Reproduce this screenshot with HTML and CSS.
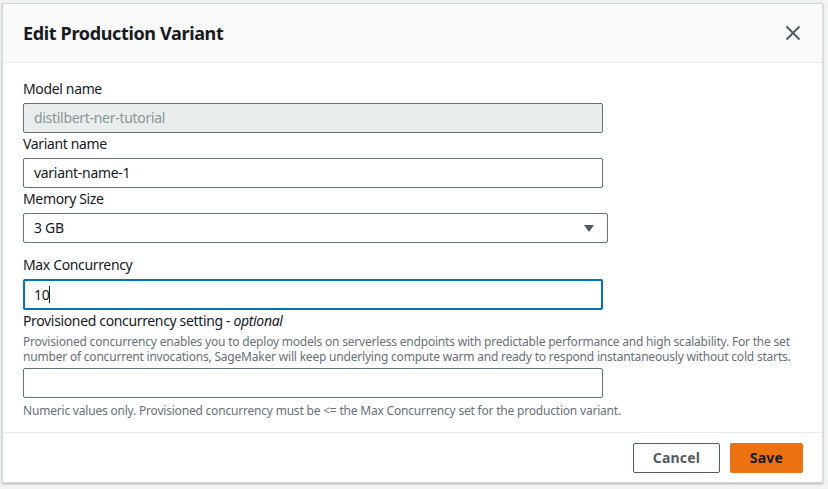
FILE: index.html
```html
<!DOCTYPE html>
<html>
<head>
<meta charset="utf-8">
<link rel="stylesheet" href="styles.css">
</head>
<body>
<div class="modal">
  <div class="header">
    <h2 class="title">Edit Production Variant</h2>
    <button class="close" aria-label="Close">
      <svg width="16" height="16" viewBox="0 0 16 16"><path d="M1.5 1.5 L14.5 14.5 M14.5 1.5 L1.5 14.5" stroke="#545b64" stroke-width="2" fill="none"/></svg>
    </button>
  </div>
  <div class="body">
    <div class="field">
      <label class="label">Model name</label>
      <div class="input disabled">distilbert-ner-tutorial</div>
    </div>
    <div class="field">
      <label class="label">Variant name</label>
      <div class="input">variant-name-1</div>
    </div>
    <div class="field">
      <label class="label">Memory Size</label>
      <div class="input select">3 GB
        <svg class="caret" width="10" height="7" viewBox="0 0 10 7"><path d="M0 0 H10 L5 7 Z" fill="#545b64"/></svg>
      </div>
    </div>
    <div class="field gap-top">
      <label class="label">Max Concurrency</label>
      <div class="input focus">10<span class="cursor"></span></div>
    </div>
    <div class="field">
      <label class="label">Provisioned concurrency setting - <i>optional</i></label>
      <p class="desc">Provisioned concurrency enables you to deploy models on serverless endpoints with predictable performance and high scalability. For the set number of concurrent invocations, SageMaker will keep underlying compute warm and ready to respond instantaneously without cold starts.</p>
      <div class="input"></div>
      <p class="hint">Numeric values only. Provisioned concurrency must be &lt;= the Max Concurrency set for the production variant.</p>
    </div>
  </div>
  <div class="footer">
    <button class="btn cancel">Cancel</button>
    <button class="btn save">Save</button>
  </div>
</div>
</body>
</html>
```
FILE: styles.css
```css
html, body {
  margin: 0;
  padding: 0;
}
body {
  width: 828px;
  height: 489px;
  background: #f2f3f3;
  font-family: "Noto Sans", "Open Sans", sans-serif;
  color: #16191f;
  overflow: hidden;
  padding: 3px 5px 0 2px;
  box-sizing: border-box;
}
.modal {
  width: 821px;
  height: 480px;
  background: #fff;
  border: 1px solid #d5dbdb;
  box-sizing: border-box;
  box-shadow: 0 1px 2px rgba(0,28,36,0.3);
  display: flex;
  flex-direction: column;
}
.header {
  height: 59px;
  background: #fafafa;
  border-bottom: 1px solid #eaeded;
  box-sizing: border-box;
  display: flex;
  align-items: center;
  justify-content: space-between;
  padding: 0 20px 1px 20px;
}
.title {
  margin: 0;
  font-size: 18px;
  font-weight: 700;
  color: #16191f;
  letter-spacing: -0.35px;
}
.close {
  background: none;
  border: 0;
  padding: 0;
  width: 16px;
  height: 16px;
  display: flex;
  margin-right: 1px;
}
.body {
  flex: 1;
  padding: 15px 20px 0 20px;
}
.field {
  display: flex;
  flex-direction: column;
  align-items: flex-start;
}
.gap-top {
  margin-top: 11px;
}
.label {
  font-size: 14px;
  line-height: 21px;
  margin-bottom: 4px;
  color: #16191f;
  letter-spacing: -0.35px;
}
.input {
  width: 580px;
  height: 30px;
  box-sizing: border-box;
  border: 1px solid #687078;
  border-radius: 2px;
  font-size: 14px;
  line-height: 28px;
  padding: 0 10px;
  color: #16191f;
  background: #fff;
  display: flex;
  align-items: center;
  letter-spacing: -0.3px;
}
.disabled {
  background: #eaeded;
  color: #879596;
  border-color: #687078;
}
.select {
  width: 585px;
  height: 30px;
  justify-content: space-between;
}
.caret {
  margin-right: 3px;
}
.focus {
  border: 2px solid #0073bb;
  padding: 0 9px;
  height: 31px;
}
.cursor {
  display: inline-block;
  width: 1px;
  height: 17px;
  background: #16191f;
}
.desc {
  margin: -1px 0 4px 0;
  font-size: 12px;
  line-height: 15px;
  color: #687078;
  width: 780px;
  letter-spacing: -0.2px;
}
.hint {
  margin: 4px 0 0 0;
  font-size: 12px;
  line-height: 18px;
  color: #687078;
  letter-spacing: -0.2px;
}
.footer {
  height: 50px;
  border-top: 1px solid #eaeded;
  box-sizing: border-box;
  display: flex;
  justify-content: flex-end;
  align-items: center;
  gap: 10px;
  padding: 0 19px 0 0;
}
.btn {
  height: 30px;
  box-sizing: border-box;
  font-family: inherit;
  font-size: 14px;
  font-weight: 700;
  border-radius: 2px;
  padding: 0;
  letter-spacing: 0.2px;
}
.cancel {
  width: 87px;
  background: #fff;
  border: 1px solid #545b64;
  color: #545b64;
}
.save {
  width: 73px;
  background: #ec7211;
  border: 1px solid #ec7211;
  color: #16191f;
}
```
